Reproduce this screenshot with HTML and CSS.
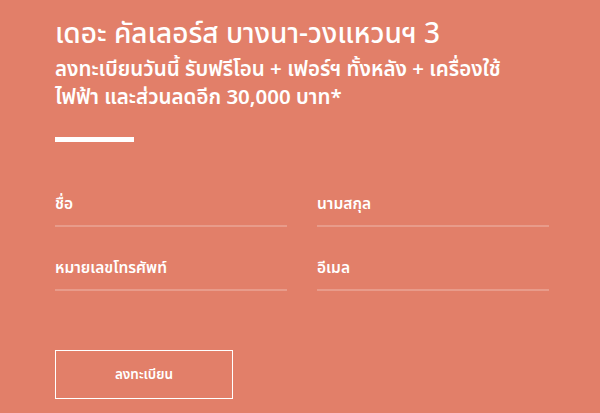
FILE: index.html
```html
<!DOCTYPE html>
<html>
<head>
  <title>Register</title>
  <link rel="stylesheet" href="styles.css">
</head>
<body>
  <section class="register">
    <h1 class="title">เดอะ คัลเลอร์ส บางนา-วงแหวนฯ 3</h1>
    <p class="promo">ลงทะเบียนวันนี้ รับฟรีโอน + เฟอร์ฯ ทั้งหลัง + เครื่องใช้<br>ไฟฟ้า และส่วนลดอีก 30,000 บาท*</p>
    <div class="divider"></div>

    <form class="form">
      <div class="field">
        <label>ชื่อ</label>
      </div>
      <div class="field">
        <label>นามสกุล</label>
      </div>
      <div class="field">
        <label>หมายเลขโทรศัพท์</label>
      </div>
      <div class="field">
        <label>อีเมล</label>
      </div>
    </form>

    <button class="btn-register">ลงทะเบียน</button>
  </section>
</body>
</html>
```

FILE: styles.css
```css
body {
  margin: 0;
  background-color: #e27f69;
  font-family: "Noto Sans Thai", "Noto Sans", sans-serif;
  color: #fff;
}

.register {
  padding: 17px 51px 0 55px;
}

.title {
  margin: 0;
  font-size: 28px;
  font-weight: 500;
  line-height: 36px;
}

.promo {
  margin: 3px 0 0;
  font-size: 20.5px;
  font-weight: 600;
  line-height: 28px;
}

.divider {
  width: 79px;
  height: 5px;
  background-color: #fff;
  margin-top: 25px;
}

.form {
  display: grid;
  grid-template-columns: 1fr 1fr;
  column-gap: 30px;
  margin-top: 21px;
}

.field {
  height: 64px;
  display: flex;
  align-items: flex-end;
}

.field label {
  display: block;
  width: 100%;
  font-size: 15.5px;
  font-weight: 600;
  line-height: 20px;
  padding-bottom: 10px;
  border-bottom: 2px solid rgba(255, 255, 255, 0.22);
}

.btn-register {
  margin-top: 59px;
  width: 178px;
  height: 49px;
  background: transparent;
  border: 1px solid #fff;
  color: #fff;
  font-family: inherit;
  font-size: 13.5px;
  font-weight: 600;
  cursor: pointer;
}
```
